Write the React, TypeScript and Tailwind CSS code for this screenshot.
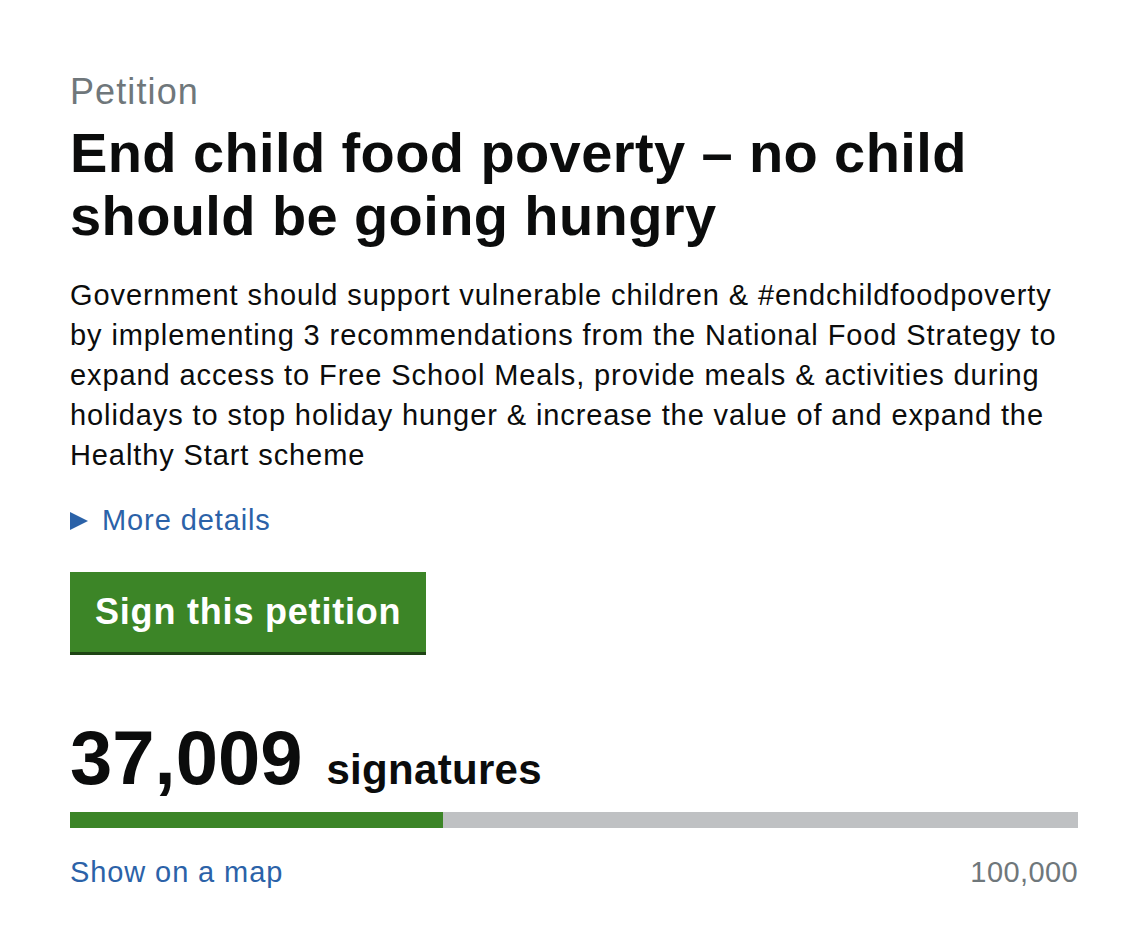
export default function App() {
  const count = 37009;
  const goal = 100000;
  const pct = (count / goal) * 100;

  return (
    <div className="min-h-screen bg-white font-['Liberation_Sans',Arial,sans-serif] text-[#0b0c0c]">
      <div className="w-[1008px] ml-[70px] pt-[72px]">
        <p className="text-[36px] leading-[40px] tracking-[1.1px] text-[#6f777b]">Petition</p>
        <h1 className="mt-[9px] text-[56px] leading-[63px] font-bold tracking-[0.4px]">
          End child food poverty – no child should be going hungry
        </h1>
        <p className="mt-[28px] text-[29px] leading-[40px] tracking-[0.9px]">
          Government should support vulnerable children &amp; #endchildfoodpoverty by implementing 3 recommendations from the National Food Strategy to expand access to Free School Meals, provide meals &amp; activities during holidays to stop holiday hunger &amp; increase the value of and expand the Healthy Start scheme
        </p>
        <div className="mt-[25px] flex items-center gap-[14px] text-[29px] leading-[40px] tracking-[0.9px] text-[#2b62a8]">
          <svg width="18" height="18" viewBox="0 0 18 18" className="mt-[1px]">
            <polygon points="0,0 18,9 0,18" fill="#2b62a8" />
          </svg>
          <span>More details</span>
        </div>
        <button className="mt-[32px] h-[80px] px-[25px] bg-[#3c8527] text-white text-[36px] font-bold tracking-[0.8px] shadow-[0_3px_0_#1e4414]">
          Sign this petition
        </button>
        <div className="mt-[68px] flex items-baseline gap-[24px] font-bold">
          <span className="text-[76px] leading-[76px]">37,009</span>
          <span className="text-[42px] leading-[42px] tracking-[0.3px]">signatures</span>
        </div>
        <div className="mt-[16px] h-[16px] bg-[#bfc1c3]">
          <div className="h-full bg-[#3c8527]" style={{ width: `${pct}%` }} />
        </div>
        <div className="mt-[24px] flex justify-between text-[29px] leading-[40px] tracking-[0.9px]">
          <span className="text-[#2b62a8]">Show on a map</span>
          <span className="text-[#6f777b] tracking-[0.4px]">100,000</span>
        </div>
      </div>
    </div>
  );
}
